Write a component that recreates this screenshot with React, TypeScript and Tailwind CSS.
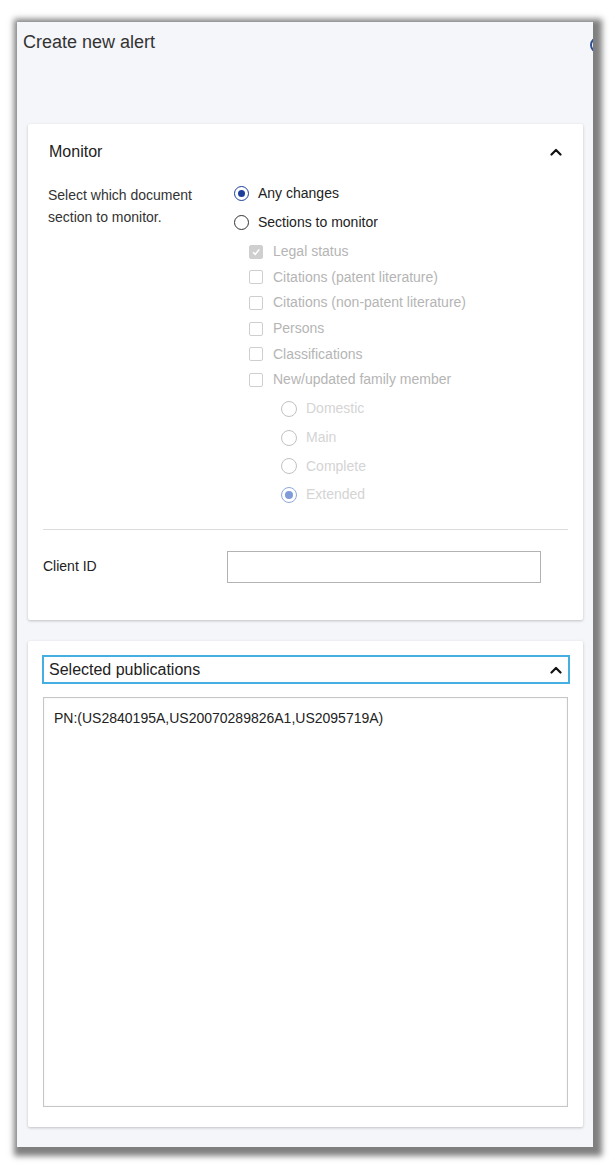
import React from 'react';

const FONT = '"Liberation Sans", Arial, sans-serif';

const SECTIONS = [
    { label: 'Legal status', checked: true },
    { label: 'Citations (patent literature)', checked: false },
    { label: 'Citations (non-patent literature)', checked: false },
    { label: 'Persons', checked: false },
    { label: 'Classifications', checked: false },
    { label: 'New/updated family member', checked: false },
];

const FAMILY = [
    { label: 'Domestic', checked: false },
    { label: 'Main', checked: false },
    { label: 'Complete', checked: false },
    { label: 'Extended', checked: true },
];

function ChevronUp() {
    return (
        <svg width="12" height="8" viewBox="0 0 12 8" className="shrink-0">
            <polyline points="1.5,6.5 6,2 10.5,6.5" fill="none" stroke="#111" strokeWidth="2.2" strokeLinecap="round" strokeLinejoin="round" />
        </svg>
    );
}

function Radio({ checked, disabled }: { checked: boolean; disabled?: boolean }) {
    if (disabled) {
        return (
            <span className={`w-[16px] h-[16px] rounded-full border-[1.5px] flex items-center justify-center shrink-0 ${checked ? 'border-[#8fa9dc]' : 'border-[#c2c2c2]'}`}>
                {checked && <span className="w-[8px] h-[8px] rounded-full bg-[#7f9cd8]" />}
            </span>
        );
    }
    return (
        <span className={`w-[15px] h-[15px] rounded-full border-[1.5px] flex items-center justify-center shrink-0 ${checked ? 'border-[#1d3f9b]' : 'border-[#333]'}`}>
            {checked && <span className="w-[7px] h-[7px] rounded-full bg-[#1d3f9b]" />}
        </span>
    );
}

function Checkbox({ checked }: { checked: boolean }) {
    return (
        <span className={`w-[14px] h-[14px] rounded-[2px] border flex items-center justify-center shrink-0 ${checked ? 'bg-[#cfcfcf] border-[#cfcfcf]' : 'bg-white border-[#cfcfcf]'}`}>
            {checked && (
                <svg width="10" height="10" viewBox="0 0 10 10">
                    <polyline points="2,5.2 4.2,7.4 8.2,2.6" fill="none" stroke="#fff" strokeWidth="1.6" />
                </svg>
            )}
        </span>
    );
}

export default function App() {
    return (
        <div className="w-[610px] h-[1169px] bg-white pt-[22px] pl-[17px]" style={{ fontFamily: FONT }}>
            <div className="w-[576px] h-[1125px] bg-[#f5f6fa] overflow-hidden shadow-[3px_3px_6px_6px_rgba(0,0,0,0.5)] flex flex-col">
                {/* header */}
                <div className="h-[102px] flex justify-between items-start pt-[8px] pl-[6px]">
                    <div className="text-[18px] leading-[24px] text-[#333]">Create new alert</div>
                    <span className="w-[16px] h-[16px] rounded-full border-2 border-[#2d4f96] mt-[7px] mr-[-13px]" />
                </div>

                {/* Monitor card */}
                <div className="mx-[11px] w-[555px] h-[496px] bg-white rounded-[2px] shadow-[0_1px_3px_rgba(0,0,0,0.22)] flex flex-col">
                    <div className="h-[55px] flex items-center justify-between pl-[21px] pr-[21px] pt-[1px]">
                        <span className="text-[16px] text-[#222]">Monitor</span>
                        <ChevronUp />
                    </div>
                    <div className="flex">
                        <div className="w-[206px] pl-[20px] pt-[5px] text-[14px] leading-[22px] text-[#333]">
                            Select which document<br />section to monitor.
                        </div>
                        <div className="flex flex-col">
                            <label className="h-[29px] flex items-center gap-[9px] text-[14px] text-[#222]">
                                <Radio checked />
                                <span>Any changes</span>
                            </label>
                            <label className="h-[29px] flex items-center gap-[9px] text-[14px] text-[#222]">
                                <Radio checked={false} />
                                <span>Sections to monitor</span>
                            </label>
                            <div className="mt-[2px] pl-[15px] flex flex-col">
                                {SECTIONS.map(s => (
                                    <label key={s.label} className="h-[25.6px] flex items-center gap-[10px] text-[14px] text-[#b5b5b5]">
                                        <Checkbox checked={s.checked} />
                                        <span>{s.label}</span>
                                    </label>
                                ))}
                            </div>
                            <div className="mt-[2px] pl-[47px] flex flex-col">
                                {FAMILY.map(f => (
                                    <label key={f.label} className="h-[28.67px] flex items-center gap-[9px] text-[14px] text-[#d4d4d4]">
                                        <Radio checked={f.checked} disabled />
                                        <span>{f.label}</span>
                                    </label>
                                ))}
                            </div>
                        </div>
                    </div>
                    <div className="mx-[15px] mt-[20px] border-t border-[#dcdcdc]" />
                    <div className="mt-[21px] mx-[15px] flex items-center">
                        <span className="w-[184px] text-[14px] text-[#222] pb-[2px]">Client ID</span>
                        <input type="text" className="w-[314px] h-[32px] border border-[#b3b3b3] bg-white outline-none px-2 text-[14px]" />
                    </div>
                </div>

                {/* Selected publications card */}
                <div className="mx-[11px] mt-[21px] w-[555px] h-[486px] bg-white rounded-[2px] shadow-[0_1px_3px_rgba(0,0,0,0.22)] pt-[14px] px-[14px] flex flex-col">
                    <div className="h-[29px] w-[528px] border-2 border-[#45afe3] flex items-center justify-between pl-[5px] pr-[6px]">
                        <span className="text-[16px] text-[#222]">Selected publications</span>
                        <ChevronUp />
                    </div>
                    <div className="mt-[13px] ml-[1px] w-[525px] h-[410px] border border-[#c6c6c6] shadow-[inset_0_0_2px_rgba(0,0,0,0.08)] pl-[10px] pt-[11px] text-[14px] leading-[18px] text-[#222]">
                        PN:(US2840195A,US20070289826A1,US2095719A)
                    </div>
                </div>
            </div>
        </div>
    );
}
